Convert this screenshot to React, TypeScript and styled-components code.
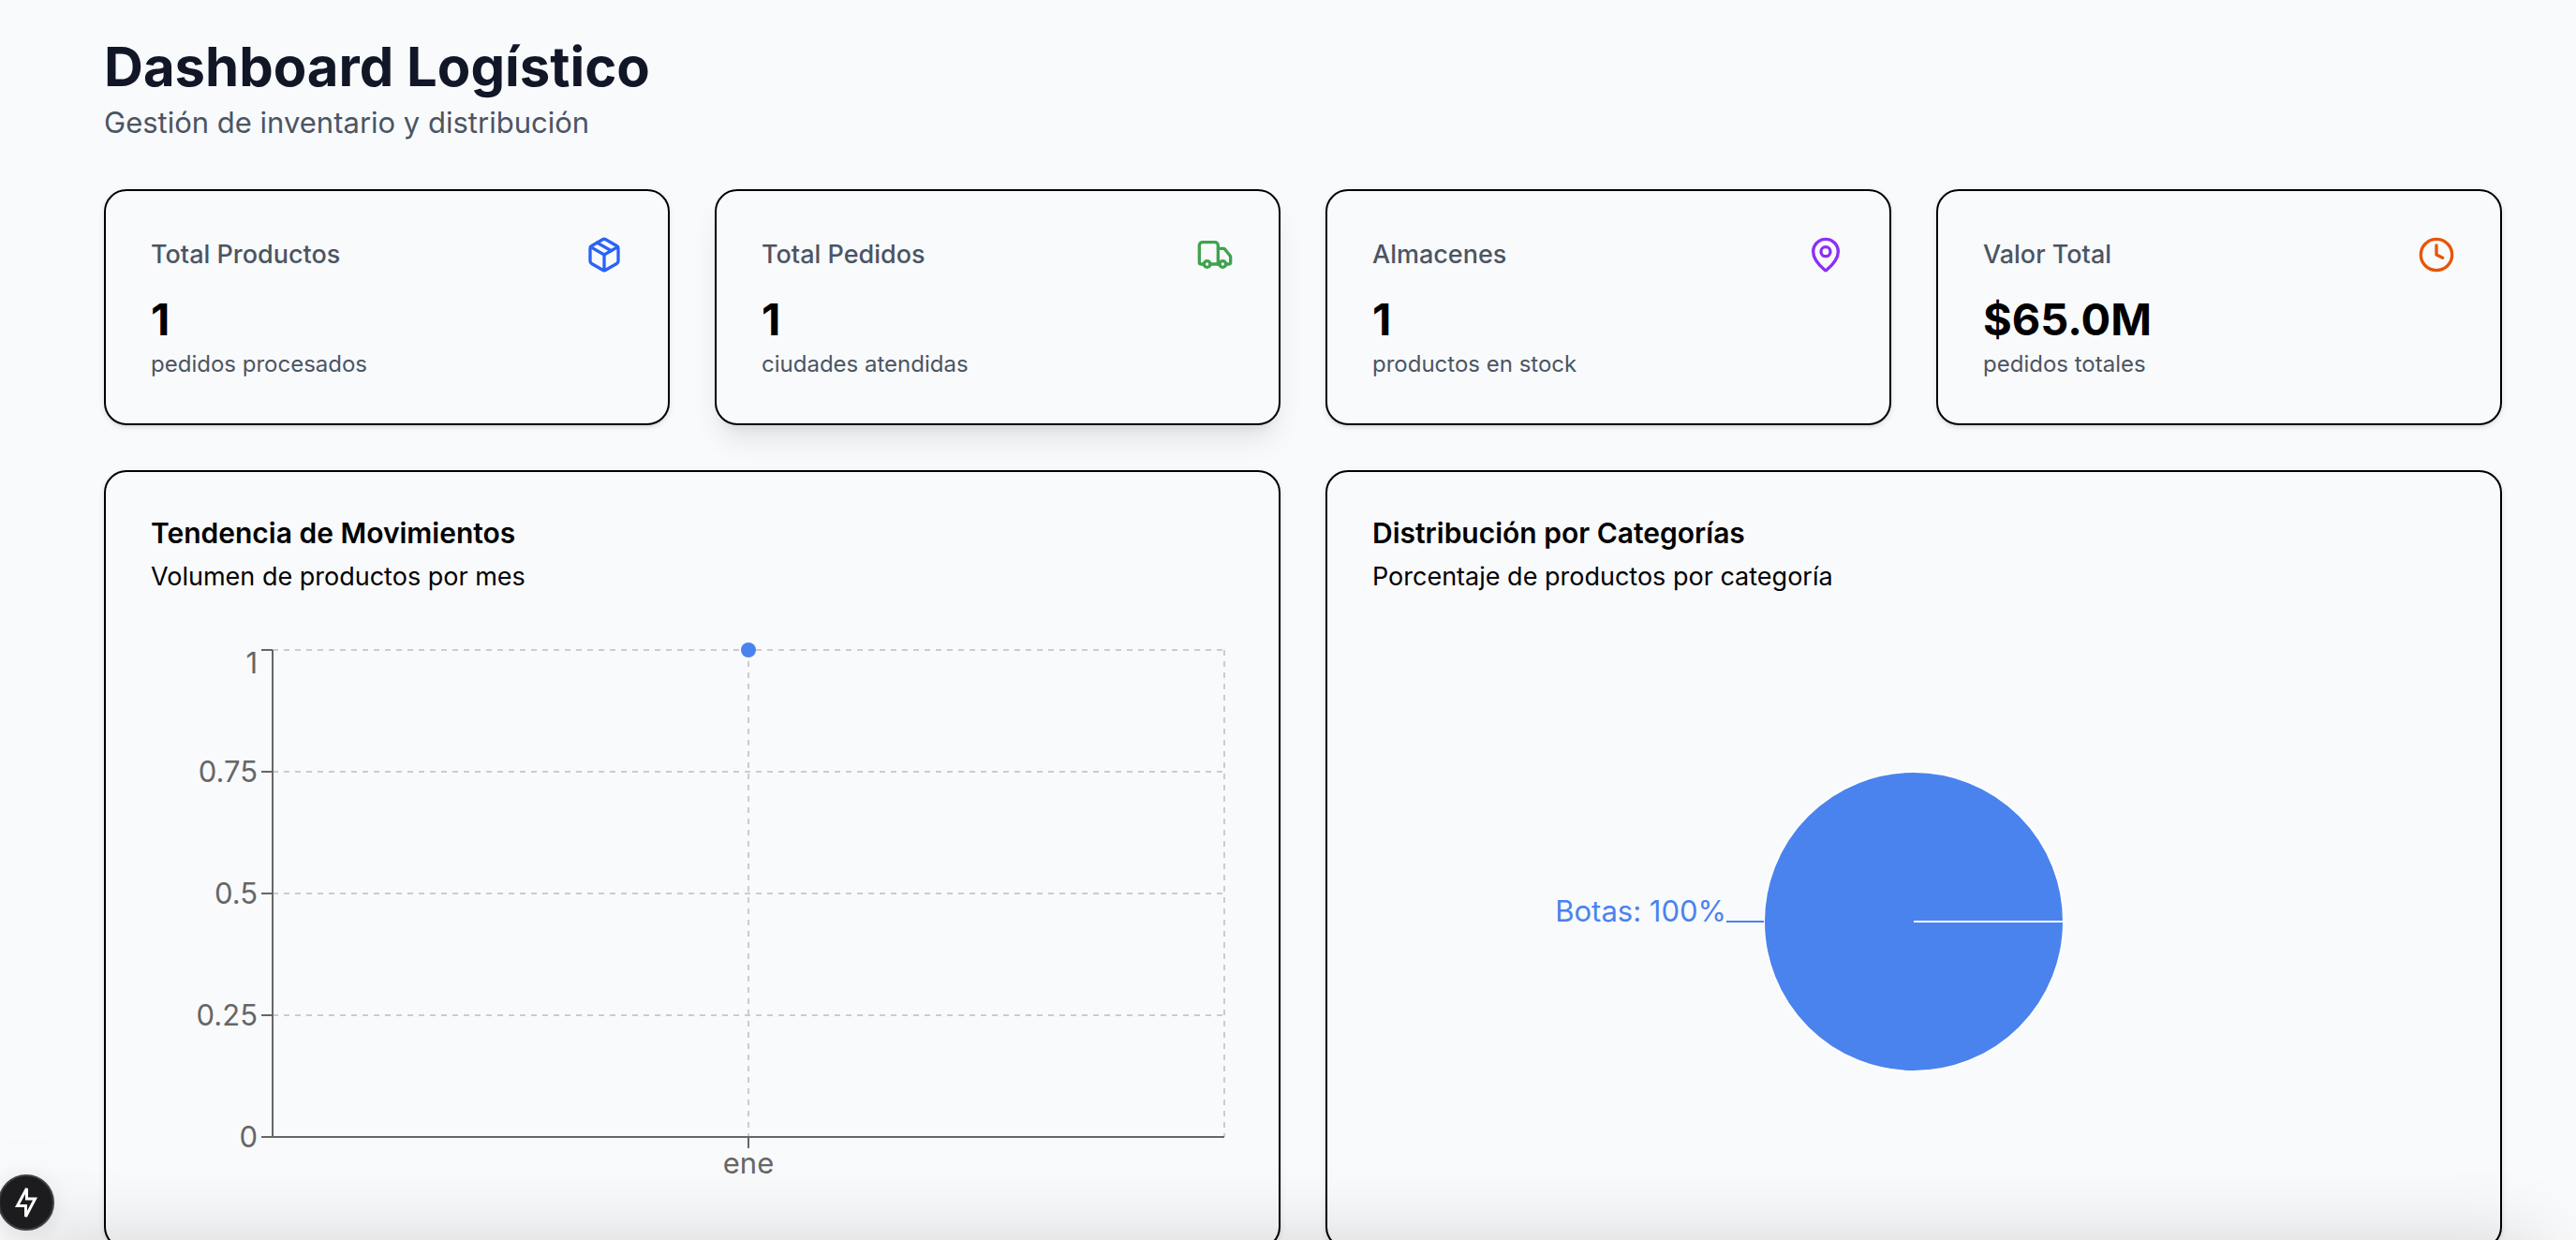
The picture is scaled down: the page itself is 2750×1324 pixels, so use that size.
import React from "react";
import styled, { createGlobalStyle } from "styled-components";
import { Package, Truck, MapPin, Clock, type LucideIcon } from "lucide-react";

const GlobalStyle = createGlobalStyle`
  *, *::before, *::after { box-sizing: border-box; }
  html { scrollbar-width: none; }
  body {
    margin: 0;
    background: #f9fafc;
    color: #000;
    font-family: Inter, "Liberation Sans", sans-serif;
  }
  h1, h2, h3, p { margin: 0; }
`;

const Page = styled.main`
  display: flex;
  flex-direction: column;
  gap: 48px;
  padding: 34px 79px 48px 111px;
`;

const Title = styled.h1`
  font-size: 58px;
  line-height: 74px;
  font-weight: 700;
  color: #111727;
`;

const Subtitle = styled.p`
  font-size: 31px;
  line-height: 46px;
  color: #4b5563;
`;

const StatGrid = styled.section`
  display: grid;
  grid-template-columns: repeat(4, 1fr);
  gap: 48px;
`;

const PanelGrid = styled.section`
  display: grid;
  grid-template-columns: repeat(2, 1fr);
  gap: 48px;
`;

const Card = styled.article<{ $raised?: boolean }>`
  border: 2px solid #000;
  border-radius: 24px;
  padding: 48px;
  background: #f9fafc;
  box-shadow: ${(p) =>
    p.$raised
      ? "0 20px 30px -6px rgba(0,0,0,.1), 0 8px 12px -8px rgba(0,0,0,.1)"
      : "0 2px 6px rgba(0,0,0,.1), 0 2px 4px -2px rgba(0,0,0,.1)"};
`;

const StatHeader = styled.header`
  display: flex;
  align-items: center;
  justify-content: space-between;
  padding-bottom: 16px;
`;

const StatName = styled.h3`
  font-size: 27px;
  line-height: 40px;
  font-weight: 500;
  color: #4b5563;
`;

const StatValue = styled.p`
  font-size: 47px;
  line-height: 66px;
  font-weight: 700;
`;

const StatNote = styled.p`
  font-size: 24px;
  line-height: 30px;
  color: #4b5563;
`;

const PanelHeader = styled.header`
  display: flex;
  flex-direction: column;
  gap: 10px;
  padding-bottom: 48px;
`;

const PanelTitle = styled.h2`
  font-size: 30px;
  line-height: 34px;
  font-weight: 600;
`;

const PanelText = styled.p`
  font-size: 27px;
  line-height: 40px;
`;

const Chart = styled.svg`
  display: block;
  width: 100%;
  height: 600px;
  font-size: 31px;
`;

const BottomShade = styled.div`
  position: fixed;
  left: 40px;
  right: 40px;
  top: 100%;
  height: 160px;
  pointer-events: none;
  box-shadow: 0 0 80px rgba(0,0,0,.15);
`;

const ToolButton = styled.button`
  position: fixed;
  left: -2px;
  bottom: 10px;
  display: grid;
  place-items: center;
  width: 60px;
  height: 60px;
  padding: 0;
  border: 2px solid #404042;
  border-radius: 50%;
  background: #1c1c1e;
  color: #fff;
  box-shadow: 0 4px 24px rgba(0,0,0,.1), 0 16px 96px rgba(0,0,0,.08);
`;

type Stat = {
  name: string;
  value: string;
  note: string;
  icon: LucideIcon;
  color: string;
  raised?: boolean;
};

const stats: Stat[] = [
  { name: "Total Productos", value: "1", note: "pedidos procesados", icon: Package, color: "#2b63f6" },
  { name: "Total Pedidos", value: "1", note: "ciudades atendidas", icon: Truck, color: "#3fa34d", raised: true },
  { name: "Almacenes", value: "1", note: "productos en stock", icon: MapPin, color: "#8c2ff5" },
  { name: "Valor Total", value: "$65.0M", note: "pedidos totales", icon: Clock, color: "#e85507" },
];

const BLUE = "#4a83ee";
const plot = { left: 130, right: 1146, top: 10, bottom: 530 };
const ticks = [0, 0.25, 0.5, 0.75, 1];
const yOf = (v: number) => plot.bottom - v * (plot.bottom - plot.top);
const middle = (plot.left + plot.right) / 2;

function TrendChart() {
  return (
    <Chart viewBox="0 0 1156 600" role="img" aria-label="Tendencia de Movimientos">
      <g stroke="#ccc" strokeWidth="2" strokeDasharray="6 6">
        {ticks.map((t) => (
          <line key={t} x1={plot.left} x2={plot.right} y1={yOf(t)} y2={yOf(t)} />
        ))}
        {[middle, plot.right].map((x) => (
          <line key={x} x1={x} x2={x} y1={plot.top} y2={plot.bottom} />
        ))}
      </g>
      <g stroke="#666" strokeWidth="2">
        <line x1={plot.left} x2={plot.right} y1={plot.bottom} y2={plot.bottom} />
        <line x1={plot.left} x2={plot.left} y1={plot.top} y2={plot.bottom} />
        <line x1={middle} x2={middle} y1={plot.bottom} y2={plot.bottom + 12} />
        {ticks.map((t) => (
          <line key={t} x1={plot.left - 12} x2={plot.left} y1={yOf(t)} y2={yOf(t)} />
        ))}
      </g>
      <g fill="#666">
        {ticks.map((t) => (
          <text key={t} x={plot.left - 16} y={t === 1 ? 35 : yOf(t) + 11} textAnchor="end">
            {t}
          </text>
        ))}
        <text x={middle} y={plot.bottom + 39} textAnchor="middle">
          ene
        </text>
      </g>
      <circle cx={middle} cy={plot.top} r="8" fill={BLUE} />
    </Chart>
  );
}

function CategoryChart() {
  return (
    <Chart viewBox="0 0 1156 600" role="img" aria-label="Distribución por Categorías">
      <circle cx="578" cy="300" r="160" fill={BLUE} stroke="#fff" strokeWidth="2" />
      <line x1="578" x2="738" y1="300" y2="300" stroke="#fff" strokeWidth="2" />
      <line x1="378" x2="418" y1="300" y2="300" stroke={BLUE} strokeWidth="2" />
      <text x="378" y="300" textAnchor="end" fill={BLUE}>
        Botas: 100%
      </text>
    </Chart>
  );
}

export default function App() {
  return (
    <>
      <GlobalStyle />
      <Page>
        <header>
          <Title>Dashboard Logístico</Title>
          <Subtitle>Gestión de inventario y distribución</Subtitle>
        </header>
        <StatGrid>
          {stats.map(({ name, value, note, icon: Icon, color, raised }) => (
            <Card key={name} $raised={raised}>
              <StatHeader>
                <StatName>{name}</StatName>
                <Icon size={40} color={color} />
              </StatHeader>
              <StatValue>{value}</StatValue>
              <StatNote>{note}</StatNote>
            </Card>
          ))}
        </StatGrid>
        <PanelGrid>
          <Card>
            <PanelHeader>
              <PanelTitle>Tendencia de Movimientos</PanelTitle>
              <PanelText>Volumen de productos por mes</PanelText>
            </PanelHeader>
            <TrendChart />
          </Card>
          <Card>
            <PanelHeader>
              <PanelTitle>Distribución por Categorías</PanelTitle>
              <PanelText>Porcentaje de productos por categoría</PanelText>
            </PanelHeader>
            <CategoryChart />
          </Card>
        </PanelGrid>
      </Page>
      <BottomShade />
      <ToolButton type="button" aria-label="Herramientas">
        <svg
          width="26"
          height="34"
          viewBox="0 0 26 34"
          fill="none"
          stroke="currentColor"
          strokeWidth="3"
          strokeMiterlimit="3"
        >
          <path d="M13.5 2 L3.5 20.5 H12.5 V32 L22.5 13 H13.5 Z" />
        </svg>
      </ToolButton>
    </>
  );
}
